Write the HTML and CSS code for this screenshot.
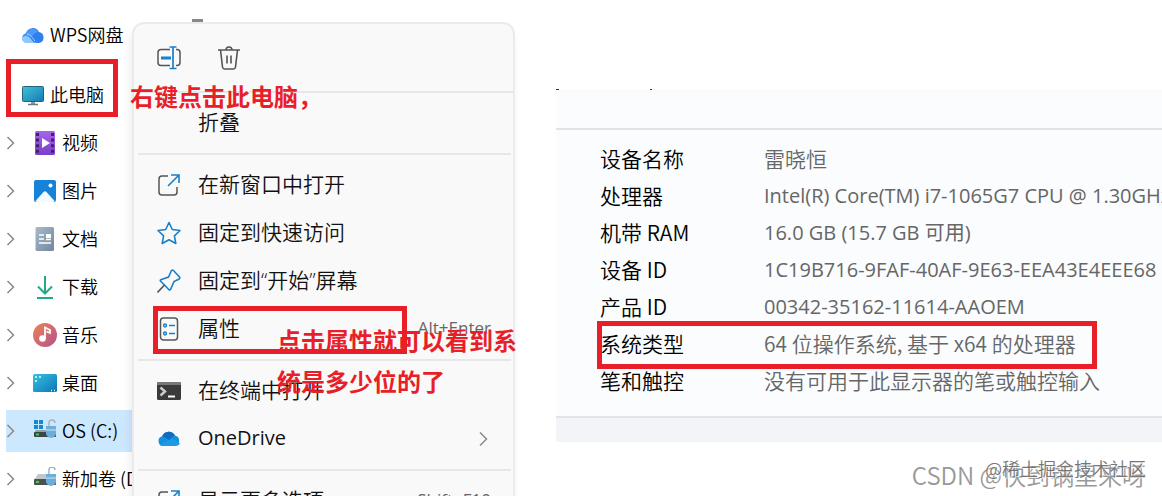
FILE: index.html
```html
<!DOCTYPE html>
<html lang="zh-CN">
<head>
  <meta charset="UTF-8">
  <meta name="viewport" content="width=device-width, initial-scale=1.0">
  <title>查看系统类型</title>
  <link rel="stylesheet" href="styles.css">
</head>
<body>
  <!-- Explorer sidebar -->
  <nav class="sidebar">
    <a href="#" class="side-item root wps">
      <svg class="icon" viewBox="0 0 24 24">
        <path d="M6 20a5 5 0 0 1-1-9.800A7 7 0 0 1 18 9a5.600 5.600 0 0 1 0 11z" fill="#2f7fee"/>
        <path d="M5 10.500A7 7 0 0 1 17.500 9c-4 0-5.500 4-7.500 5.500C8 13 5 13 1.500 13.500A5 5 0 0 1 5 10.500z" fill="#4a98f7"/>
        <path d="M1 14c4-2 7-1 9 2s4 4 7 4H6a5 5 0 0 1-5-6z" fill="#8fc8fd"/>
        <path d="M6 11c4 0 5 4 8 7" fill="none" stroke="#b5d8ff" stroke-width="1"/>
      </svg>
      <span>WPS网盘</span>
    </a>
    <a href="#" class="side-item root boxed">
      <svg class="icon" viewBox="0 0 24 24">
        <defs><linearGradient id="pc" x2="1" y2="1"><stop stop-color="#3fc3d8"/><stop offset="1" stop-color="#1679b3"/></linearGradient></defs>
        <rect x="1.500" y="3.500" width="21" height="15" rx="1" fill="url(#pc)" stroke="#20637f"/>
        <path d="M10 19h4v2h-4z" fill="#8b99a3"/>
        <path d="M7 21.500h10" stroke="#6b7b86" stroke-width="1.500"/>
      </svg>
      <span>此电脑</span>
    </a>
    <a href="#" class="side-item">
      <svg class="chevron" viewBox="0 0 9 14"><path d="M1.500 1l6 6-6 6"/></svg>
      <svg class="icon" viewBox="0 0 24 24">
        <defs><linearGradient id="video" x2="0" y2="1"><stop stop-color="#a764ea"/><stop offset="1" stop-color="#7c3fc9"/></linearGradient></defs>
        <rect x="2" y="0" width="20" height="24" rx="1.500" fill="url(#video)"/>
        <path d="M4.500 2v20M19.500 2v20" stroke="#43206f" stroke-width="3" stroke-dasharray="3 2.600"/>
        <path d="M9 7l8 5-8 5z" fill="#fff"/>
      </svg>
      <span>视频</span>
    </a>
    <a href="#" class="side-item">
      <svg class="chevron" viewBox="0 0 9 14"><path d="M1.500 1l6 6-6 6"/></svg>
      <svg class="icon" viewBox="0 0 24 24">
        <rect x="1" y="1" width="22" height="22" rx="2" fill="#1683d8"/>
        <path d="M2.500 22L10.500 13q1.500-1.500 3 0l8 9q-.5 1-2 1h-15q-1.500 0-2-1z" fill="#f5faff"/>
        <circle cx="17.500" cy="6.500" r="2" fill="#fff"/>
      </svg>
      <span>图片</span>
    </a>
    <a href="#" class="side-item">
      <svg class="chevron" viewBox="0 0 9 14"><path d="M1.500 1l6 6-6 6"/></svg>
      <svg class="icon" viewBox="0 0 24 24">
        <defs><linearGradient id="doc" x2="1" y2="1"><stop stop-color="#a9bacb"/><stop offset="1" stop-color="#71879f"/></linearGradient></defs>
        <rect x="2.500" y="0" width="18.500" height="24" rx="1.500" fill="url(#doc)"/>
        <path d="M6 8h5M6 12h5M6 16h12M13 12.500h5" stroke="#fff" stroke-width="1.500"/>
        <rect x="13" y="7" width="5" height="4" fill="#fff"/>
      </svg>
      <span>文档</span>
    </a>
    <a href="#" class="side-item">
      <svg class="chevron" viewBox="0 0 9 14"><path d="M1.500 1l6 6-6 6"/></svg>
      <svg class="icon" viewBox="0 0 24 24">
        <path d="M12 1v17M5 11.500l7 7 7-7M4 23h16" fill="none" stroke="#22aa84" stroke-width="2"/>
      </svg>
      <span>下载</span>
    </a>
    <a href="#" class="side-item">
      <svg class="chevron" viewBox="0 0 9 14"><path d="M1.500 1l6 6-6 6"/></svg>
      <svg class="icon" viewBox="0 0 24 24">
        <defs><linearGradient id="music" x2="1" y2="1"><stop stop-color="#eb8454"/><stop offset="1" stop-color="#b5508f"/></linearGradient></defs>
        <circle cx="12" cy="12" r="12" fill="url(#music)"/>
        <circle cx="9.500" cy="15.500" r="3.300" fill="#fff"/>
        <path d="M12 15.500V4.500l5 2.500v3l-3.500-1.500" fill="none" stroke="#fff" stroke-width="1.800"/>
      </svg>
      <span>音乐</span>
    </a>
    <a href="#" class="side-item">
      <svg class="chevron" viewBox="0 0 9 14"><path d="M1.500 1l6 6-6 6"/></svg>
      <svg class="icon" viewBox="0 0 24 24">
        <defs><linearGradient id="desk" x2="1" y2="1"><stop stop-color="#38c1e0"/><stop offset="1" stop-color="#0b74b8"/></linearGradient></defs>
        <rect x="0" y="3" width="24" height="18" rx="1.500" fill="url(#desk)"/>
        <path d="M2 6h2M2 10h2M6 6h2M18 19.500h1M21 19.500h1" stroke="#e4faff" stroke-width="1.500"/>
      </svg>
      <span>桌面</span>
    </a>
    <a href="#" class="side-item selected">
      <svg class="chevron" viewBox="0 0 9 14"><path d="M1.500 1l6 6-6 6"/></svg>
      <svg class="icon" viewBox="0 0 24 24">
        <path d="M1 1h4v4H1zM6 1h4v4H6zM1 6h4v4H1zM6 6h4v4H6z" fill="#1389d6"/>
        <path d="M3 11h15l4 3H1z" fill="#9a9fa3"/>
        <rect x="1" y="13" width="22" height="5" rx="1" fill="#3f4446"/>
        <path d="M3 15.500h3" stroke="#3fd34b" stroke-width="2"/>
        <path d="M16 8V4a3 3 0 0 1 6 0" fill="none" stroke="#a3b4c0" stroke-width="1.500"/>
        <path d="M13 7h10v8q-1 3-5 4-4-1-5-4z" fill="#6caeda"/>
        <path d="M13 11h10" stroke="#cbe5f5"/>
      </svg>
      <span>OS (C:)</span>
    </a>
    <a href="#" class="side-item">
      <svg class="chevron" viewBox="0 0 9 14"><path d="M1.500 1l6 6-6 6"/></svg>
      <svg class="icon" viewBox="0 0 24 24">
        <path d="M5 7h13l4 6H1z" fill="#c3c7ca"/>
        <rect x="1" y="12" width="22" height="6" rx="1" fill="#4b5053"/>
        <path d="M3 15h3" stroke="#3fd34b" stroke-width="2"/>
        <path d="M16 7V3a3 3 0 0 1 6 0" fill="none" stroke="#a3b4c0" stroke-width="1.500"/>
        <path d="M13 7h10v8q-1 3-5 4-4-1-5-4z" fill="#6caeda"/>
        <path d="M13 11h10" stroke="#cbe5f5"/>
      </svg>
      <span>新加卷 (D:)</span>
    </a>
  </nav>

  <!-- Context menu -->
  <div class="menu">
    <div class="tools">
      <button type="button" class="tool" aria-label="重命名">
        <svg class="icon" viewBox="0 0 24 24">
          <path d="M13 3.500H4Q1 3.500 1 6.500v10q0 3 3 3h9M19 3.500h1q3 0 3 3v10q0 3-3 3h-1" fill="none" stroke="#555" stroke-width="1.500"/>
          <path d="M16 1v21M12.500 1h7M12.500 22.500h7" stroke="#1a7fc9" stroke-width="1.700"/>
          <path d="M4 12h10" stroke="#1a7fc9" stroke-width="3"/>
        </svg>
      </button>
      <button type="button" class="tool" aria-label="删除">
        <svg class="icon" viewBox="0 0 24 24">
          <path d="M1 4h22M9 4q0-3 3-3t3 3M3.500 4l2 17q.3 2 2 2h9q1.700 0 2-2l2-17M10 9.500v8M14 9.500v8" fill="none" stroke="#555" stroke-width="1.600"/>
        </svg>
      </button>
    </div>
    <hr class="wide">
    <button type="button" class="menu-item"><span class="icon"></span><span>折叠</span></button>
    <hr>
    <button type="button" class="menu-item">
      <svg class="icon" viewBox="0 0 24 24">
        <path d="M11 3H5Q2 3 2 6v13q0 3 3 3h12q3 0 3-3v-5" fill="none" stroke="#555" stroke-width="1.500"/>
        <path d="M14 2h8v8M22 2L11 13" fill="none" stroke="#1a7fc9" stroke-width="1.600"/>
      </svg>
      <span>在新窗口中打开</span>
    </button>
    <button type="button" class="menu-item">
      <svg class="icon" viewBox="0 0 24 24">
        <path d="M12 1.500l3.300 7 7.700 1-5.600 5.300L18.800 22.500 12 18.800 5.200 22.500l1.400-7.700L1 9.500l7.700-1z" fill="none" stroke="#1a7fc9" stroke-width="1.600" stroke-linejoin="round"/>
      </svg>
      <span>固定到快速访问</span>
    </button>
    <button type="button" class="menu-item">
      <svg class="icon" viewBox="0 0 24 24">
        <path d="M14.500 1.500q1-.8 2 0l6 6.500q.8 1-.3 2L17 12.500l-3.500 8q-.7.900-1.500.2L3.500 12q-.6-.8.300-1.300L11.500 8z" fill="none" stroke="#1a7fc9" stroke-width="1.600"/>
        <path d="M7.500 16L.5 23.500" stroke="#555" stroke-width="1.600"/>
      </svg>
      <span>固定到“开始”屏幕</span>
    </button>
    <button type="button" class="menu-item marked">
      <svg class="icon" viewBox="0 0 24 24">
        <rect x="3.500" y="1" width="17" height="22" rx="3" fill="none" stroke="#555" stroke-width="1.500"/>
        <g fill="none" stroke="#1a7fc9" stroke-width="1.500"><circle cx="8" cy="8.500" r="1.400"/><circle cx="8" cy="16.500" r="1.400"/><path d="M12 8.500h6M12 16.500h6"/></g>
      </svg>
      <span>属性</span>
      <kbd>Alt+Enter</kbd>
    </button>
    <hr>
    <button type="button" class="menu-item">
      <svg class="icon" viewBox="0 0 24 24">
        <rect x="0" y="3" width="24" height="18" rx="1.500" fill="#3a3a3a"/>
        <path d="M0 6V4.500Q0 3 1.500 3h21Q24 3 24 4.500V6z" fill="#777"/>
        <path d="M3.500 8.500l4.500 4-4.500 4" fill="none" stroke="#ccc" stroke-width="2.400"/>
        <path d="M11 17.500h7" stroke="#fff" stroke-width="2"/>
      </svg>
      <span>在终端中打开</span>
    </button>
    <button type="button" class="menu-item">
      <svg class="icon" viewBox="0 0 24 24">
        <path d="M6 19a5 5 0 0 1-.8-9.800A7 7 0 0 1 18 8.500 5.400 5.400 0 0 1 18 19z" fill="#1490df"/>
        <path d="M5.200 9.200A7 7 0 0 1 18 8.500q-3 .5-5.500 5-3.300-3-7.300-4.300z" fill="#0f6cc0"/>
        <path d="M2.500 17.500L15 11.500l8 5q-1.500 2.500-5 2.500H6q-2 0-3.500-1.500z" fill="#1c9be4"/>
      </svg>
      <span class="latin">OneDrive</span>
      <svg class="chevron more" viewBox="0 0 9 14"><path d="M1 0.500l6.500 6.500L1 13.500"/></svg>
    </button>
    <hr>
    <button type="button" class="menu-item">
      <svg class="icon" viewBox="0 0 24 24">
        <path d="M11 3H5Q2 3 2 6v13q0 3 3 3h12q3 0 3-3v-5" fill="none" stroke="#555" stroke-width="1.500"/>
        <path d="M14 2h8v8M22 2L11 13" fill="none" stroke="#1a7fc9" stroke-width="1.600"/>
      </svg>
      <span>显示更多选项</span>
      <kbd>Shift+F10</kbd>
    </button>

    <!-- Red notes written over the menu -->
    <p class="note note-top">右键点击此电脑，</p>
    <p class="note note-bottom">点击属性就可以看到系<br>统是多少位的了</p>
  </div>

  <!-- Device specifications -->
  <main class="specs">
    <table>
      <tr><th>设备名称</th><td>雷晓恒</td></tr>
      <tr><th>处理器</th><td class="latin">Intel(R) Core(TM) i7-1065G7 CPU @ 1.30GHz</td></tr>
      <tr><th>机带 RAM</th><td class="latin">16.0 GB (15.7 GB 可用)</td></tr>
      <tr><th>设备 ID</th><td class="latin">1C19B716-9FAF-40AF-9E63-EEA43E4EEE68</td></tr>
      <tr><th>产品 ID</th><td class="latin">00342-35162-11614-AAOEM</td></tr>
      <tr class="marked"><th>系统类型</th><td>64 位操作系统, 基于 x64 的处理器</td></tr>
      <tr><th>笔和触控</th><td>没有可用于此显示器的笔或触控输入</td></tr>
    </table>
  </main>

  <div class="watermark csdn">CSDN @快到锅里来呀</div>
  <div class="watermark juejin">@稀土掘金技术社区</div>
</body>
</html>
```
FILE: styles.css
```css
*,
*::before,
*::after {
  margin: 0;
  padding: 0;
  box-sizing: border-box;
}

body {
  position: relative;
  display: flex;
  align-items: flex-start;
  height: 100vh;
  overflow: hidden;
  background: #fff;
  color: #111;
  font-family: "Noto Sans CJK SC", "Noto Sans", sans-serif;
  font-weight: 350;
}

.icon {
  width: 24px;
  height: 24px;
  flex-shrink: 0;
}

.chevron {
  width: 9px;
  height: 14px;
  flex-shrink: 0;
  fill: none;
  stroke: #8a8a8a;
  stroke-width: 1.5;
}

/* Sidebar */
.sidebar {
  width: 132px;
  flex-shrink: 0;
  padding: 14px 0 0 6px;
  overflow: hidden;
}

.side-item {
  display: flex;
  align-items: center;
  height: 42px;
  margin-bottom: 6px;
  color: #000;
  font-size: 18px;
  text-decoration: none;
  white-space: nowrap;
}

.side-item .icon {
  margin: 0 5px 0 18px;
}

.side-item.root .icon {
  margin: 0 5px 0 15px;
}

.side-item.wps {
  margin-bottom: 3px;
}

.side-item.boxed {
  width: 112px;
  height: 58px;
  margin-bottom: 5px;
  padding-top: 14px;
  border: 5px solid #e81f29;
}

.side-item.boxed .icon {
  margin-left: 10px;
}

.side-item.selected {
  background: #cce8ff;
}

/* Context menu */
.menu {
  position: relative;
  width: 383px;
  flex-shrink: 0;
  margin-top: 22px;
  background: #f9f9f9;
  border: 2px solid #ebebeb;
  border-radius: 12px;
  box-shadow: -2px 8px 8px rgba(0, 0, 0, 0.08);
}

.menu::before {
  content: "";
  position: absolute;
  top: -5px;
  left: 58px;
  width: 11px;
  height: 3px;
  background: #888;
}

.menu hr {
  height: 2px;
  margin: 6px 2px 6px 4px;
  border: none;
  background: #e7e7e7;
}

.menu hr.wide {
  margin-top: 0;
  margin-right: 0;
}

.tools {
  display: flex;
  gap: 36px;
  height: 67px;
  padding-left: 23px;
}

.tool {
  display: flex;
  align-items: center;
  border: none;
  background: none;
}

.menu-item {
  position: relative;
  display: flex;
  align-items: center;
  gap: 17px;
  width: 100%;
  height: 48px;
  padding: 0 22px 0 23px;
  border: none;
  background: none;
  color: #111;
  font-family: "Open Sans", "Noto Sans CJK SC", sans-serif;
  font-size: 21px;
  font-weight: 350;
  line-height: 30px;
  text-align: left;
}

.menu-item .latin {
  font-size: 20px;
  font-weight: 400;
}

.menu-item kbd {
  margin-left: auto;
  color: #666;
  font-family: inherit;
  font-size: 17px;
  font-weight: 400;
}

.side-item span,
.menu-item span,
.menu-item kbd {
  padding-bottom: 2px;
}

.menu-item .more {
  margin-left: auto;
  margin-right: 3px;
}

.menu-item.marked::after {
  content: "";
  position: absolute;
  top: 1px;
  left: 19px;
  width: 254px;
  height: 48px;
  border: 5px solid #e81f29;
}

.note {
  position: absolute;
  color: #e81f29;
  font-size: 24px;
  font-weight: 700;
  line-height: 41px;
  white-space: nowrap;
}

.note-top {
  top: 51px;
  left: -4px;
}

.note-bottom {
  top: 295px;
  left: 143px;
}

/* Device specifications */
.specs {
  position: relative;
  flex: 1;
  min-width: 0;
  margin: 89px 0 0 41px;
  padding-top: 39px;
  overflow: hidden;
  background: #fafcfd;
  border-bottom: 24px solid #f2f4f7;
}

/* Feet of the heading cut off above the panel */
.specs::before {
  content: "";
  position: absolute;
  top: 0;
  left: 0;
  width: 96px;
  height: 1px;
  background: linear-gradient(to right, #333 3px, transparent 3px 94px, #333 94px);
}

.specs table {
  display: block;
  padding: 10px 0 17px 41px;
  border-top: 2px solid #e1e4e6;
  border-bottom: 2px solid #e1e4e6;
  border-spacing: 0;
  font-size: 21px;
  line-height: 37px;
  white-space: nowrap;
}

.specs tr {
  position: relative;
  height: 37px;
}

.specs th {
  min-width: 167px;
  padding-left: 3px;
  color: #000;
  font-weight: 350;
  text-align: left;
}

.specs td {
  color: #666;
}

.specs td.latin {
  font-family: "Open Sans", "Noto Sans CJK SC", sans-serif;
  font-size: 20px;
  font-weight: 400;
}

.specs tr.marked::after {
  content: "";
  position: absolute;
  top: -4px;
  left: 0;
  width: 500px;
  height: 48px;
  border: 5px solid #e81f29;
}

/* Watermarks */
.watermark {
  position: absolute;
  right: 16px;
  white-space: nowrap;
}

.csdn {
  bottom: 4px;
  color: #999;
  font-size: 24px;
  line-height: 34px;
}

.juejin {
  bottom: 14px;
  color: #777;
  font-size: 18px;
  line-height: 28px;
  text-shadow: 1px 1px 1px #fff;
}
```
